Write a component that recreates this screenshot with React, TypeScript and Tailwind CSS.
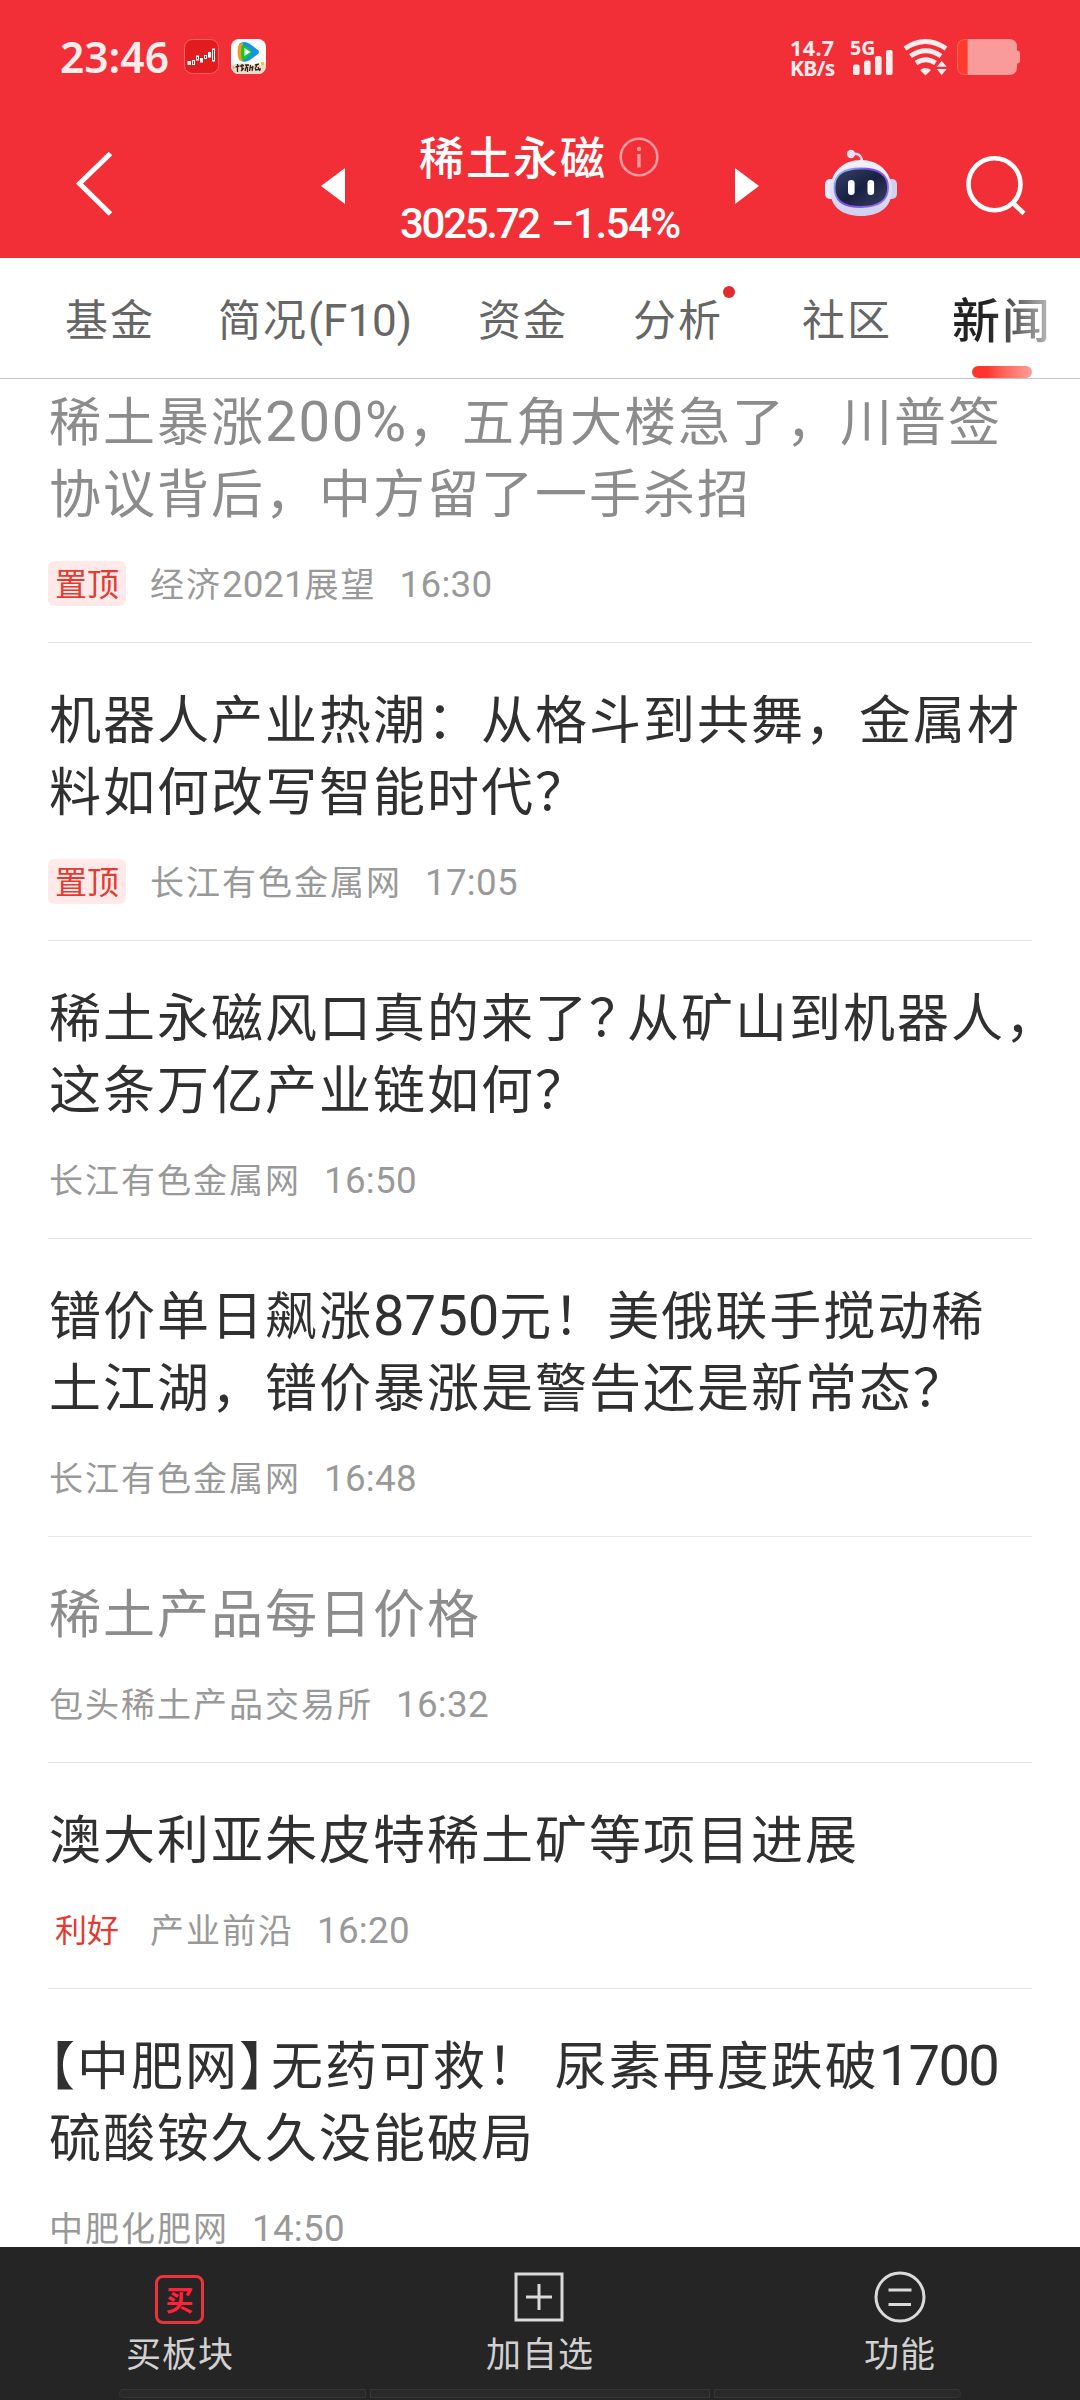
import type { ReactNode } from "react";

const LATIN = /([0-9A-Za-z%:.()]+)/;

/** Sets Latin runs in a slightly larger grotesque next to the CJK glyphs. */
function Mixed({ children, tracking = "tracking-normal" }: { children: string; tracking?: string }) {
  return (
    <>
      {children.split(LATIN).map((part, i) =>
        LATIN.test(part) ? (
          <span key={i} className={`font-['Roboto'] text-[1.08em] leading-[0] ${tracking}`}>
            {part}
          </span>
        ) : (
          part
        ),
      )}
    </>
  );
}

type Item = {
  lines: ReactNode[];
  read?: boolean;
  tag?: { text: string; filled: boolean };
  source: string;
  time: string;
};

const items: Item[] = [
  {
    lines: [
      <Mixed tracking="tracking-[1.800px]">稀土暴涨200%，五角大楼急了，川普签</Mixed>,
      "协议背后，中方留了一手杀招",
    ],
    read: true,
    tag: { text: "置顶", filled: true },
    source: "经济2021展望",
    time: "16:30",
  },
  {
    lines: ["机器人产业热潮：从格斗到共舞，金属材", "料如何改写智能时代？"],
    tag: { text: "置顶", filled: true },
    source: "长江有色金属网",
    time: "17:05",
  },
  {
    lines: [
      <>
        稀土永磁风口真的来了<span className="tracking-[-14px]">？</span>从矿山到机器人，
      </>,
      "这条万亿产业链如何？",
    ],
    source: "长江有色金属网",
    time: "16:50",
  },
  {
    lines: [<Mixed>镨价单日飙涨8750元！美俄联手搅动稀</Mixed>, "土江湖，镨价暴涨是警告还是新常态？"],
    source: "长江有色金属网",
    time: "16:48",
  },
  { lines: ["稀土产品每日价格"], read: true, source: "包头稀土产品交易所", time: "16:32" },
  {
    lines: ["澳大利亚朱皮特稀土矿等项目进展"],
    tag: { text: "利好", filled: false },
    source: "产业前沿",
    time: "16:20",
  },
  {
    lines: [
      <>
        <span className="[font-feature-settings:'halt']">【</span>中肥网
        <span className="mr-[4px] [font-feature-settings:'halt']">】</span>
        <Mixed tracking="tracking-[-1.700px]">无药可救！ 尿素再度跌破1700</Mixed>
      </>,
      "硫酸铵久久没能破局",
    ],
    source: "中肥化肥网",
    time: "14:50",
  },
];

function NewsRow({ item }: { item: Item }) {
  return (
    <article className="mx-12 shrink-0 border-b border-[#e6e6e6] pt-[38px] pb-[36px]">
      <h2
        className={`text-[52px] leading-[72px] tracking-[2px] whitespace-nowrap ${item.read ? "text-[#8c8c8c]" : "text-[#303030]"}`}
      >
        {item.lines.map((line, i) => (
          <div key={i} className="h-[72px] pl-[1px]">
            {line}
          </div>
        ))}
      </h2>
      <div className="mt-[34px] flex h-[45px] items-center text-[34px] leading-[45px] tracking-[2px] whitespace-nowrap text-[#999999]">
        {item.tag && (
          <span
            className={`mr-6 flex h-[45px] w-[78px] items-center justify-center rounded-md pb-[2px] text-[32px] text-[#e33a31] tracking-normal ${item.tag.filled ? "bg-[#ffeae9]" : ""}`}
          >
            {item.tag.text}
          </span>
        )}
        <span className={`h-[47px] ${item.tag ? "" : "pl-[1px]"}`}>
          <Mixed>{item.source}</Mixed>
        </span>
        <span className="ml-[23px] h-[47px]">
          <Mixed tracking="tracking-[0.300px]">{item.time}</Mixed>
        </span>
      </div>
    </article>
  );
}

function StatusBar() {
  return (
    <div className="flex h-[75px] items-start pt-[37px] pl-[60px] text-[#ffeced]">
      <span className="w-[124px] font-['Noto_Sans'] text-[42.500px] leading-[39px] font-semibold">23:46</span>
      <svg className="mt-[2px]" width="35" height="35" viewBox="0 0 35 35">
        <rect x="0.5" y="0.5" width="34" height="34" rx="8" fill="#e01c1e" stroke="#f4605f" />
        <g fill="#fff" stroke="#fff" strokeWidth="1">
          <rect x="4" y="22.500" width="2.500" height="3" />
          <rect x="8.500" y="21.500" width="2" height="4" fill="none" />
          <rect x="12.500" y="17" width="2" height="4" fill="none" />
          <rect x="16.500" y="19.500" width="2" height="3.500" />
          <rect x="20.500" y="16.500" width="2" height="3" fill="none" />
          <rect x="24.500" y="13.500" width="2" height="4.500" />
          <rect x="28.500" y="10" width="2" height="12" fill="none" />
        </g>
      </svg>
      <svg className="mt-[2px] ml-3" width="35" height="35" viewBox="0 0 35 35">
        <rect width="35" height="35" rx="8" fill="#fff" />
        <path d="M0 26Q9 23 18 25T35 25V27a8 8 0 0 1-8 8H8a8 8 0 0 1-8-8Z" fill="#e9dccb" />
        <path d="M8 5q5-4 11 0l8 6q2 2 0 4l-8 6q-5 3-9 1-3-8-2-17Z" fill="#1592e8" />
        <path d="M8 5q-3 8 0 16l4 1V4Z" fill="#f29a1c" />
        <path d="M11 6q7 1 10 7-3 7-10 8-2-7 0-15Z" fill="#12c837" />
        <path d="M13.500 9v8l6-4Z" fill="#fff" />
        <path
          d="M6.500 25v8M4.500 28l4-1M9 27l4-.5M11 25v7M10 32l3-3M14 26h4M16 26l-2 6M16.500 28v5M19.500 26l-1 6M18.500 29l4-1M22 27l-1 5M24 26l4-1M26 26l-2 4M24 31l6-1M27 28l2 4"
          stroke="#3c2418"
          strokeWidth="1.300"
          fill="none"
        />
        <path d="M1 28q3-1 2 2" stroke="#b7a08a" fill="none" />
        <circle cx="31.500" cy="24.500" r="1.800" fill="#f0c52c" />
      </svg>
      <div className="ml-[524px] w-[60px] font-['Noto_Sans'] text-[21.500px] leading-[21px] font-bold">
        <div className="tracking-[0.400px]">14.7</div>
        <div className="text-[21px] tracking-[-0.600px]">KB/s</div>
      </div>
      <div className="w-[52px]">
        <div className="h-[11px] font-['Noto_Sans'] text-[19.500px] leading-[21px] font-bold">5G</div>
        <svg width="46" height="27" viewBox="850 48 46 27" fill="currentColor">
          <rect x="853" y="64.500" width="6.600" height="10.500" rx="2" />
          <rect x="864" y="60.500" width="6.600" height="14.500" rx="2" />
          <rect x="875" y="56" width="6.600" height="19" rx="2" />
          <rect x="886" y="50" width="6.600" height="25" rx="2" />
        </svg>
      </div>
      <svg className="mt-[2px] ml-[1px]" width="46" height="37" viewBox="903 39 46 37" fill="none" stroke="currentColor">
        <path d="M905 48.500q20.500-14 41 0M910.500 56q15.500-10.500 30.500 0M916 63q10-6.500 19.500 0" strokeWidth="4.800" />
        <path d="M920 70q5.500-4 11 0l-5.500 5.500Z" fill="currentColor" stroke="none" />
        <path d="M936.700 66.800l5-5.800 5 5.800ZM936.700 69h10l-5 6Z" fill="currentColor" stroke="none" />
      </svg>
      <svg className="mt-[2px] ml-[8px]" width="63" height="36" viewBox="0 0 63 36">
        <path d="M10.500 0H52q8 0 8 8v3.500q3 0 3 3v7q0 3-3 3V28q0 8-8 8H10.500Z" fill="#f99a9b" />
        <path d="M10.500 0.500H8q-7.500 0-7.500 8v19q0 8 7.500 8h2.500Z" fill="#ff3b2c" stroke="#f9625c" />
      </svg>
    </div>
  );
}

function Robot() {
  return (
    <svg width="74" height="68" viewBox="0 0 74 68">
      <defs>
        <linearGradient id="shell" x1="0" y1="0" x2="0" y2="1">
          <stop offset="0" stopColor="#f4f2fc" />
          <stop offset="1" stopColor="#cfcff0" />
        </linearGradient>
        <linearGradient id="visor" x1="0" y1="0" x2="1" y2="0.600">
          <stop offset="0" stopColor="#8edcff" />
          <stop offset="0.500" stopColor="#7a48e0" />
          <stop offset="1" stopColor="#8a6cf0" />
        </linearGradient>
        <linearGradient id="glass" x1="0" y1="0" x2="1" y2="1">
          <stop offset="0" stopColor="#3a4266" />
          <stop offset="0.500" stopColor="#192143" />
          <stop offset="1" stopColor="#3a3f62" />
        </linearGradient>
      </defs>
      <path d="M27 5q10-2 11 7" fill="none" stroke="#dcd8f4" strokeWidth="2.500" />
      <circle cx="27" cy="5" r="4.200" fill="#e6e3fa" />
      <rect x="1" y="30" width="12" height="20" rx="5" fill="#eceafa" />
      <rect x="61" y="30" width="12" height="20" rx="5" fill="#d2d0f2" />
      <path d="M37 11C54 11 67 22 68 40 68 58 56 67 37 67S6 58 6 40C7 22 20 11 37 11Z" fill="url(#shell)" />
      <path
        d="M37 19.500C56 19.500 64 26 64 38.500S56 58 37 58 10.500 51 10.500 38.500 18 19.500 37 19.500Z"
        fill="url(#glass)"
        stroke="url(#visor)"
        strokeWidth="1.800"
      />
      <rect x="24" y="31" width="6.600" height="15" rx="3.300" fill="#fff" />
      <rect x="43.500" y="31" width="6.600" height="15" rx="3.300" fill="#fff" />
    </svg>
  );
}

function TitleBar() {
  return (
    <div className="flex h-[183px] items-start text-white">
      <svg className="mt-[75px] ml-[74px]" width="42" height="68" viewBox="0 0 42 68">
        <path d="M36.500 3.500L5.500 33.500L36.500 64" fill="none" stroke="#fff" strokeWidth="5" />
      </svg>
      <svg className="mt-[93px] ml-[205px]" width="24" height="36" viewBox="0 0 24 36">
        <path d="M24 0V36L0 18Z" fill="#fff" />
      </svg>
      <div className="mt-[55px] ml-[55px] w-[335px] shrink-0">
        <div className="flex h-[52px] items-center pl-[19px]">
          <span className="text-[45px] leading-[52px] font-medium tracking-[2px] whitespace-nowrap">稀土永磁</span>
          <svg className="mt-[1px] ml-[12px]" width="40" height="40" viewBox="0 0 40 40" fill="none" stroke="#fa9a9e">
            <circle cx="20" cy="20" r="18.300" strokeWidth="2.600" />
            <path d="M20 17v13.500" strokeWidth="3.400" />
            <circle cx="20" cy="12" r="2.200" fill="#fa9a9e" stroke="none" />
          </svg>
        </div>
        <div className="mt-[17px] h-[50px] font-['Roboto'] text-[42px] leading-[50px] font-medium tracking-[-2.300px] whitespace-nowrap">
          3025.72 <span className="ml-[4px] tracking-[-1.500px]">−1.54%</span>
        </div>
      </div>
      <svg className="mt-[93px] shrink-0" width="24" height="36" viewBox="0 0 24 36">
        <path d="M0 0V36L24 18Z" fill="#fff" />
      </svg>
      <div className="mt-[74px] ml-[65px] shrink-0">
        <Robot />
      </div>
      <svg className="mt-[80px] ml-[66px] shrink-0" width="64" height="64" viewBox="0 0 64 64" fill="none" stroke="#fff" strokeWidth="4.600">
        <circle cx="30.500" cy="29.300" r="26" />
        <path d="M49 48L60 58.500" />
      </svg>
    </div>
  );
}

function Tabs() {
  return (
    <nav className="flex h-[121px] shrink-0 items-center border-b border-[#c4c4c4] bg-white pb-[2px] pl-[65px] text-[43px] leading-[60px] tracking-[2px] whitespace-nowrap text-[#666666]">
      <span className="w-[153px]">基金</span>
      <span className="w-[260px]">
        简况<span className="font-['Roboto'] text-[44px] leading-[0] tracking-normal">(F10)</span>
      </span>
      <span className="w-[155px]">资金</span>
      <span className="relative w-[169px]">
        分析
        <i className="absolute top-[-1px] left-[90px] size-3 rounded-full bg-[#e12b30]" />
      </span>
      <span className="w-[150px]">社区</span>
      <span className="relative w-[104px] bg-linear-to-r from-[#222] from-35% to-[#ccc] bg-clip-text text-[48px] font-medium tracking-[2px] text-transparent">
        新闻
        <i className="absolute top-[79px] left-[20px] h-3 w-[60px] rounded-full bg-linear-to-r from-[#fd352e] from-25% to-[#fd9c98]" />
      </span>
    </nav>
  );
}

function Action({ icon, label }: { icon: ReactNode; label: string }) {
  return (
    <div className="flex flex-1 flex-col items-center">
      <div className="flex h-[52px] items-center">{icon}</div>
      <span className="mt-[6px] text-[35px] leading-[46px] tracking-[1px] text-[#d2d0d0]">{label}</span>
    </div>
  );
}

function BottomBar() {
  return (
    <footer className="flex h-[153px] shrink-0 flex-col bg-[#252525]">
      <div className="flex h-[142px] pt-[24px]">
        <Action
          label="买板块"
          icon={
            <div className="mt-[5px] mr-[1px] flex size-[49px] items-center justify-center rounded-lg border-[3px] border-[#e9353a] pb-[2px] text-[28px] leading-none font-bold text-[#ff2238]">
              买
            </div>
          }
        />
        <Action
          label="加自选"
          icon={
            <svg className="mr-[2px]" width="50" height="50" viewBox="0 0 50 50" fill="none" stroke="#dadada" strokeWidth="3">
              <rect x="2" y="2" width="46" height="46" />
              <path d="M12 25H38M25 12V38" />
            </svg>
          }
        />
        <Action
          label="功能"
          icon={
            <svg className="mr-[1px]" width="52" height="52" viewBox="0 0 52 52" fill="none" stroke="#dadada" strokeWidth="3">
              <circle cx="26" cy="26" r="24" />
              <path d="M14.500 19H37.500M14.500 33.500H37" />
            </svg>
          }
        />
      </div>
      <div className="ml-[119px] flex h-[9px] gap-1">
        <i className="w-[247px] rounded-l-full border border-[#363636] bg-[#292929]" />
        <i className="w-[340px] border border-[#363636] bg-[#292929]" />
        <i className="w-[247px] rounded-r-full border border-[#363636] bg-[#292929]" />
      </div>
    </footer>
  );
}

export default function App() {
  return (
    <div className="flex h-[2400px] w-[1080px] flex-col overflow-hidden bg-white font-['Noto_Sans_CJK_SC',sans-serif]">
      <header className="h-[258px] shrink-0 bg-[#f22f37]">
        <StatusBar />
        <TitleBar />
      </header>
      <Tabs />
      <main className="flex min-h-0 flex-1 flex-col overflow-hidden">
        <div className="-mt-[34px] flex flex-col">
          {items.map((item, i) => (
            <NewsRow key={i} item={item} />
          ))}
        </div>
      </main>
      <BottomBar />
    </div>
  );
}
